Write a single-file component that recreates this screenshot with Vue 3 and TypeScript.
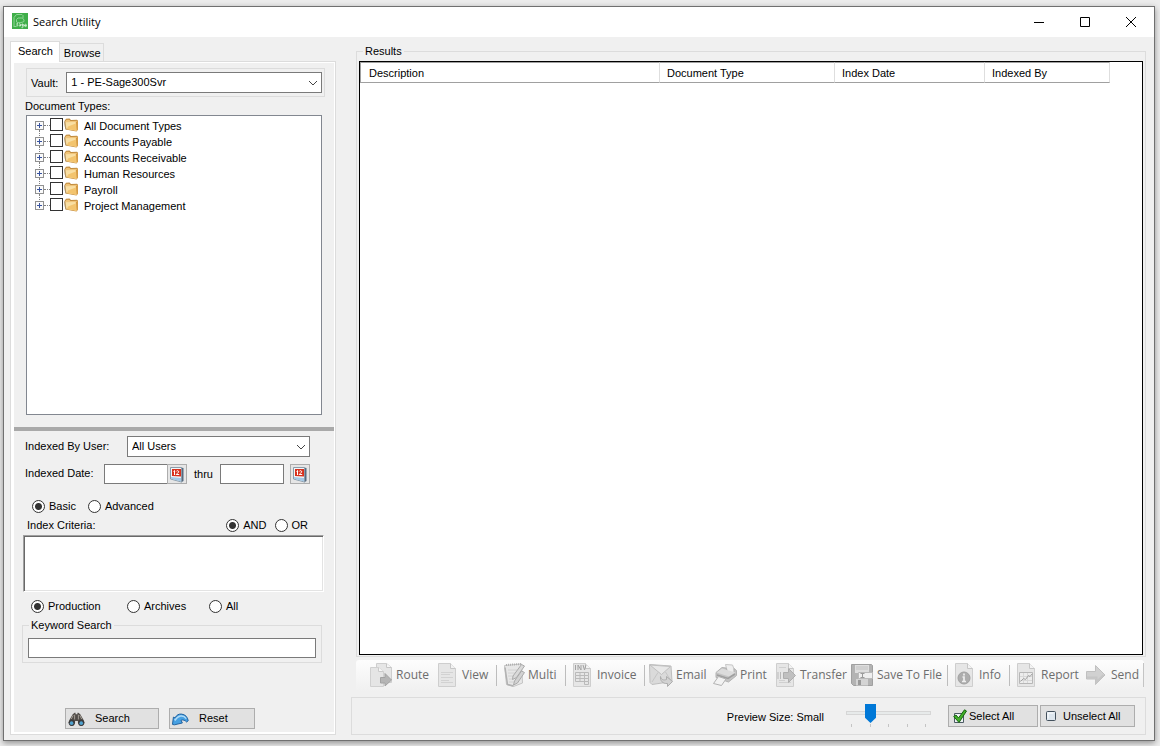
<script setup lang="ts">
import { ref } from 'vue'

interface Tool {
  id: string
  label: string
  iconWidth: number
  endsGroup?: boolean
}

const documentTypes = [
  'All Document Types',
  'Accounts Payable',
  'Accounts Receivable',
  'Human Resources',
  'Payroll',
  'Project Management',
]
const columns = ['Description', 'Document Type', 'Index Date', 'Indexed By']
const tools: Tool[] = [
  { id: 'route', label: 'Route', iconWidth: 22 },
  { id: 'view', label: 'View', iconWidth: 20, endsGroup: true },
  { id: 'multi', label: 'Multi', iconWidth: 21, endsGroup: true },
  { id: 'invoice', label: 'Invoice', iconWidth: 20, endsGroup: true },
  { id: 'email', label: 'Email', iconWidth: 24 },
  { id: 'print', label: 'Print', iconWidth: 24 },
  { id: 'transfer', label: 'Transfer', iconWidth: 20 },
  { id: 'save', label: 'Save To File', iconWidth: 22, endsGroup: true },
  { id: 'info', label: 'Info', iconWidth: 20, endsGroup: true },
  { id: 'report', label: 'Report', iconWidth: 20 },
  { id: 'send', label: 'Send', iconWidth: 21 },
]

const checked = ref<string[]>([])
const mode = ref('basic')
const operator = ref('and')
const scope = ref('production')
const previewSize = ref(1)
</script>

<template>
  <div class="desktop">
    <div class="window">
      <header class="titlebar">
        <svg class="app-icon" viewBox="0 0 16 16" aria-hidden="true">
          <rect width="16" height="16" fill="#3fae49" />
          <path d="M2 14V4.500L4.500 1.500H10l1 1V5M2 13.500h2.500" fill="none" stroke="#8fd596" />
          <path d="M4.500 9V6.500L6 5h4.500L12 7v1.500M4.500 9c2 1.200 5 .8 7.500-.5" fill="none" stroke="#8fd596" />
          <path d="M6 10.500c-1.500-.6-1.800 1-.5 1.200 1 .2.500 1.500-1 1M7 11c1.500-.6 1.500.2 1.500 2-1.500.5-1.800-.8 0-1M11 11c-1.800-.4-1.800 2 0 1.800V11v3c0 .8-1 .8-1.500.6M12.500 12.500h2c0-1.800-2-1.500-2 0 0 1.200 1.200 1.200 2 .8" fill="none" stroke="#e2f5e3" stroke-width=".8" />
        </svg>
        <h1 class="title">Search Utility</h1>
        <div class="caption-buttons">
          <button type="button" aria-label="Minimize">
            <svg viewBox="0 0 12 12"><path d="M1 6.500h10" /></svg>
          </button>
          <button type="button" aria-label="Maximize">
            <svg viewBox="0 0 12 12"><path d="M1.500 1.500h9v9h-9z" /></svg>
          </button>
          <button type="button" aria-label="Close">
            <svg viewBox="0 0 12 12"><path d="M1 1l10 10M11 1L1 11" /></svg>
          </button>
        </div>
      </header>

      <main class="body">
        <section class="sidebar">
          <div class="tabs" role="tablist">
            <button type="button" class="tab active" role="tab" aria-selected="true">Search</button>
            <button type="button" class="tab" role="tab" aria-selected="false">Browse</button>
          </div>
          <form class="tab-page" @submit.prevent>
            <div class="upper">
              <div class="vault-box">
                <label for="vault">Vault:</label>
                <span class="combo grow">
                  <select id="vault"><option>1 - PE-Sage300Svr</option></select>
                  <svg class="chevron" viewBox="0 0 10 6"><path d="M1 1l4 4 4-4" /></svg>
                </span>
              </div>
              <h2 class="heading">Document Types:</h2>
              <ul class="tree">
                <li v-for="(name, i) in documentTypes" :key="name">
                  <button type="button" class="expander" :aria-label="'Expand ' + name">
                    <svg viewBox="0 0 9 9">
                      <rect x=".5" y=".5" width="8" height="8" fill="#fafafa" stroke="#919191" />
                      <path d="M2 4.500h5M4.500 2v5" stroke="#38539f" />
                    </svg>
                  </button>
                  <span class="branch"></span>
                  <input :id="'type-' + i" v-model="checked" type="checkbox" :value="name" />
                  <svg class="folder" viewBox="0 0 15 14" aria-hidden="true">
                    <path d="M.5 3L2 .8l3.500-.3L7 2l6-.2 1 1v9l-1.500 1.700L1.500 11.500z" fill="#c08a3c" />
                    <path d="M1 3.500l1.500-1.800h2.700L6.500 3l7-.3v9L12.500 13 2 11z" fill="#f0c479" />
                    <path d="M1.500 4.200l10-.2.8 8.500L2.500 10.800z" fill="#f9dfa3" />
                    <path d="M4 8.500l7.800-3 .5 7L3 11z" fill="#f3c46e" />
                    <path d="M12 4l.7 8.500 1-1V3z" fill="#d3963d" />
                    <path d="M.7 3.500c0 3 .4 5.500 1.300 7.800" fill="none" stroke="#a9926c" />
                  </svg>
                  <label :for="'type-' + i">{{ name }}</label>
                </li>
              </ul>
            </div>
            <div class="splitter"></div>
            <div class="lower">
              <div class="row user-row">
                <label for="user">Indexed By User:</label>
                <span class="combo">
                  <select id="user"><option>All Users</option></select>
                  <svg class="chevron" viewBox="0 0 10 6"><path d="M1 1l4 4 4-4" /></svg>
                </span>
              </div>
              <div class="row date-row">
                <label class="date-label" for="from">Indexed Date:</label>
                <input id="from" type="text" class="field date" />
                <button type="button" class="calendar joined" aria-label="Pick start date">
                  <svg viewBox="0 0 14 17">
                    <path d="M11 1.500l2.500.5v13L11 16.500z" fill="#566b80" />
                    <path d="M.5 1.500h11v14.500L.5 13z" fill="#f1f5f8" stroke="#8b9ba9" />
                    <path d="M1 11l10 1v3.500L1 12.800z" fill="#a5c9e6" />
                    <path d="M2 3h9v7.500L2 10z" fill="#d8311d" />
                    <path d="M3.500 5.500l1-1V9M6.200 5.500c.5-1.300 2.700-1 2.500.4C8.600 7 6.400 7.500 6.200 8.500h3" fill="none" stroke="#fff" />
                  </svg>
                </button>
                <label class="thru" for="to">thru</label>
                <input id="to" type="text" class="field date" />
                <button type="button" class="calendar" aria-label="Pick end date">
                  <svg viewBox="0 0 14 17">
                    <path d="M11 1.500l2.500.5v13L11 16.500z" fill="#566b80" />
                    <path d="M.5 1.500h11v14.500L.5 13z" fill="#f1f5f8" stroke="#8b9ba9" />
                    <path d="M1 11l10 1v3.500L1 12.800z" fill="#a5c9e6" />
                    <path d="M2 3h9v7.500L2 10z" fill="#d8311d" />
                    <path d="M3.500 5.500l1-1V9M6.200 5.500c.5-1.300 2.700-1 2.500.4C8.600 7 6.400 7.500 6.200 8.500h3" fill="none" stroke="#fff" />
                  </svg>
                </button>
              </div>
              <div class="row mode-row">
                <label class="radio"><input v-model="mode" type="radio" name="mode" value="basic" />Basic</label>
                <label class="radio"><input v-model="mode" type="radio" name="mode" value="advanced" />Advanced</label>
              </div>
              <div class="row criteria-row">
                <label for="criteria">Index Criteria:</label>
                <span class="operators">
                  <label class="radio"><input v-model="operator" type="radio" name="operator" value="and" />AND</label>
                  <label class="radio"><input v-model="operator" type="radio" name="operator" value="or" />OR</label>
                </span>
              </div>
              <textarea id="criteria" class="criteria"></textarea>
              <div class="row scope-row">
                <label class="radio first"><input v-model="scope" type="radio" name="scope" value="production" />Production</label>
                <label class="radio second"><input v-model="scope" type="radio" name="scope" value="archives" />Archives</label>
                <label class="radio"><input v-model="scope" type="radio" name="scope" value="all" />All</label>
              </div>
              <fieldset class="keyword">
                <legend><label for="keyword">Keyword Search</label></legend>
                <input id="keyword" type="text" class="field" />
              </fieldset>
              <div class="actions">
                <button type="submit" class="push search">
                  <svg viewBox="0 0 18 16" aria-hidden="true">
                    <path d="M5 3l2-1.500h1V3h2V1.500h1L13 3l3.500 6 1 3-2 3h-3L10.500 12v-2h-3v2l-2 3h-3l-2-3 1-3z" fill="#514d49" />
                    <path d="M5.500 4L3.500 8M12.500 4l2 4M7 3.500v5M11 3.500v5" stroke="#aaa49b" />
                    <circle cx="4" cy="12" r="3.300" fill="#3a3a3c" /><circle cx="14" cy="12" r="3.300" fill="#3a3a3c" />
                    <circle cx="3.800" cy="12.400" r="1.900" fill="#4fa2cf" /><circle cx="14" cy="12.400" r="1.900" fill="#4fa2cf" />
                  </svg>
                  <span>Search</span>
                </button>
                <button type="reset" class="push reset">
                  <svg viewBox="0 0 18 16" aria-hidden="true">
                    <path d="M1.500 6l1.700.8C5 3.500 7.500 2.500 10 2.800c4 .3 6.500 3.200 7.200 7l-1.700 1.400c-1.700-2-3.800-2.700-6-1.800l1.500 2.800-8.500 2-2-.5z" fill="#46a0e2" stroke="#1d5e9c" />
                    <path d="M2.500 8.500l1 .5C6 4.500 12 3 15 7.500" fill="none" stroke="#b1dcf8" stroke-width="1.500" />
                  </svg>
                  <span>Reset</span>
                </button>
              </div>
            </div>
          </form>
        </section>

        <section class="main-column">
          <fieldset class="results">
            <legend>Results</legend>
            <div class="list">
              <table>
                <thead>
                  <tr><th v-for="column in columns" :key="column" scope="col">{{ column }}</th></tr>
                </thead>
              </table>
            </div>
          </fieldset>

          <div class="toolbar" role="toolbar" aria-label="Document actions">
            <template v-for="tool in tools" :key="tool.id">
              <button type="button" class="tool" :class="tool.id">
                <svg :width="tool.iconWidth" height="24" :viewBox="`0 0 ${tool.iconWidth} 24`" aria-hidden="true">
                  <template v-if="tool.id === 'route'">
                    <path d="M6.500.5h10l5 4v15h-15z" fill="#e6e6e6" stroke="#cecece" />
                    <path d="M16.500.5v4h5" fill="#f6f6f6" stroke="#c6c6c6" />
                    <path d="M.5 4.500h8l5 4v15H.5z" fill="#e5e5e5" stroke="#d0d0d0" />
                    <path d="M8.500 4.500v4h5" fill="#f6f6f6" stroke="#cacaca" />
                    <path d="M10.500 14.500h4.500v-4l6.500 6.500-6.500 6V20h-4.500z" fill="#b5b5b5" stroke="#a2a2a2" />
                  </template>
                  <template v-else-if="tool.id === 'multi'">
                    <path d="M.5 2.500l17-1.500 1 19-9 3.500-7-2z" fill="#e7e7e7" stroke="#c4c4c4" />
                    <path d="M2 2l15-1" stroke="#b0b0b0" stroke-width="2" stroke-dasharray="1 1" />
                    <path d="M4 7h9M4 10h8M4 13h6M5 16h4M5 19h5" stroke="#d2d2d2" />
                    <path d="M1 4.500l2.500 17 6 1.500" fill="none" stroke="#b2b2b2" stroke-width="1.500" />
                    <path d="M9 13L17.500 1.500l3 1.500-8 11.500-4 2z" fill="#dadada" stroke="#aaa" />
                    <path d="M10.500 18l7-10 3 1.500L13.500 20l-4 2z" fill="#d2d2d2" stroke="#aaa" />
                  </template>
                  <template v-else-if="tool.id === 'email'">
                    <path d="M.5 1.500l21.500 1.500 1 15.500-20 3-2-2z" fill="#dadada" stroke="#bebebe" />
                    <path d="M1 2l11.500 9.500L21.500 3.500z" fill="#e8e8e8" stroke="#c0c0c0" />
                    <path d="M3 19l6-9.500M16.500 9l5.500 9" fill="none" stroke="#c5c5c5" />
                    <path d="M11.500 13.500c1 3.500 3 4 6 3V13.500l6 5-5 5V20.500c-5 .5-7.500-3-7-7z" fill="#d2d2d2" stroke="#adadad" />
                  </template>
                  <template v-else-if="tool.id === 'print'">
                    <path d="M12.500 1.500l7 .5 3 8-8-1z" fill="#eee" stroke="#c6c6c6" />
                    <path d="M3 9.500l6-5 4 .5 1.500 4 6.500 1V5.500l2.500 2 .0 5-8 6.500L3 14.500z" fill="#c4c4c4" stroke="#b2b2b2" />
                    <path d="M3.500 9.500l5.500-4 13.500 4-6.500 4z" fill="#dcdcdc" />
                    <path d="M4 12l11 3.500 7-4.500" fill="none" stroke="#9f9f9f" stroke-width="1.500" />
                    <path d="M5.500 13.500l7.500 2.500-4.500 6.500-8-2z" fill="#f2f2f2" stroke="#b2b2b2" />
                  </template>
                  <template v-else-if="tool.id === 'save'">
                    <path d="M.5 1.500h20l1 1v20H2.500l-2-2z" fill="#b3b3b3" stroke="#a0a0a0" />
                    <path d="M4 2h14v8H4z" fill="#dedede" /><path d="M5 4h12M5 6h12" stroke="#c2c2c2" />
                    <path d="M5 16h12v6.500H5z" fill="#d4d4d4" /><path d="M7 17h3v5H7z" fill="#999" />
                    <path d="M7.500 9.500h14v6h-14z" fill="#efefef" stroke="#bababa" />
                    <path d="M9.500 10.500h4M9.500 14.500h4M11.500 10.500v4" stroke="#9b9b9b" />
                  </template>
                  <template v-else-if="tool.id === 'send'">
                    <path d="M.5 8.500h9V2.500l9.500 9.500-9.500 9.500v-5.500h-9z" fill="#d1d1d1" stroke="#c0c0c0" />
                    <path d="M1 14.500h9.500v4.500l7-7" fill="none" stroke="#c6c6c6" stroke-width="2" />
                  </template>
                  <template v-else>
                    <path d="M.5.5h12l5 5v18H.5z" fill="#e6e6e6" stroke="#cecece" />
                    <path d="M12.500.5v5h5" fill="#f3f3f3" stroke="#c6c6c6" />
                    <path v-if="tool.id === 'view'" d="M3 9.500h12M3 11.500h9M3 14.500h12M3 17.500h8M3 19.500h12" stroke="#d2d2d2" />
                    <template v-else-if="tool.id === 'transfer'">
                      <path d="M3 4.500h7M3 17.500h6M3 19.500h12" stroke="#d0d0d0" />
                      <path d="M2 9v7M4.500 9v7" stroke="#b9b9b9" />
                      <path d="M7.500 9.500h5V5.500l7 7-7 7v-4h-5z" fill="#c0c0c0" stroke="#aeaeae" />
                    </template>
                    <template v-else-if="tool.id === 'invoice'">
                      <path d="M2.500 2v5M5 7V2l3 5V2M10 2l1.500 5L13 2" fill="none" stroke="#a2a2a2" />
                      <path d="M2.500 9.500h13v3h-13zM2.500 12.500v6h13v-6M7 9.500v9M11.500 9.500v12h4v-3M2.500 15.500h13" fill="none" stroke="#bababa" />
                    </template>
                    <template v-else-if="tool.id === 'info'">
                      <circle cx="9" cy="15" r="6" fill="#adadad" stroke="#a0a0a0" />
                      <path d="M9 10.500v2M7.500 14H9v4.500M7 18.500h4" fill="none" stroke="#eee" stroke-width="1.700" />
                    </template>
                    <template v-else>
                      <path d="M2.500 9.500h13v11h-13z" fill="#ededed" stroke="#b7b7b7" />
                      <path d="M3 13.500h12M3 17.500h12M6.500 10v10M10.500 10v10" stroke="#d8d8d8" />
                      <path d="M3.500 18.500l3-3 2 1 3-4 1.500 1 2-2.500" fill="none" stroke="#a2a2a2" />
                    </template>
                  </template>
                </svg>
                <span>{{ tool.label }}</span>
              </button>
              <span v-if="tool.endsGroup" class="separator"></span>
            </template>
          </div>

          <footer class="statusbar">
            <label for="preview" class="preview-label">Preview Size: Small</label>
            <span class="slider">
              <input id="preview" v-model.number="previewSize" type="range" min="0" max="4" step="1" />
              <span class="ticks"><i v-for="n in 5" :key="n"></i></span>
            </span>
            <button type="button" class="push select-all">
              <svg viewBox="0 0 14 15" aria-hidden="true">
                <path d="M1.500 4.500h9v9h-9z" fill="#eef2f4" stroke="#4c5a64" />
                <path d="M.7 7.500l2.300-1.500 2.500 3L11.500.8l2 1.200-7.500 11.500z" fill="#43b02a" stroke="#17640f" />
              </svg>
              <span>Select All</span>
            </button>
            <button type="button" class="push unselect-all">
              <svg viewBox="0 0 12 12" aria-hidden="true">
                <rect x="1.500" y="1.500" width="9" height="9" rx="1" fill="#dde6ee" stroke="#44515d" />
                <path d="M3 8.500V3h5.500" fill="none" stroke="#fff" />
              </svg>
              <span>Unselect All</span>
            </button>
          </footer>
        </section>
      </main>
    </div>
  </div>
</template>

<style>
body {
  margin: 0;
}
</style>

<style scoped>
* {
  box-sizing: border-box;
}
.desktop {
  display: flex;
  min-height: 100vh;
  padding: 6px 5px 5px 3px;
  background: #ececec;
  color: #000;
  font: 11px/16px "Liberation Sans", Arial, sans-serif;
}
button, input, select, textarea {
  margin: 0;
  font: inherit;
  color: inherit;
}
svg {
  display: block;
  flex: none;
}
.window {
  display: flex;
  flex: 1;
  flex-direction: column;
  min-width: 0;
  border: 1px solid #707070;
  background: #f0f0f0;
  box-shadow: 0 2px 6px rgba(0, 0, 0, 0.4);
}
.titlebar {
  display: flex;
  align-items: center;
  height: 30px;
  padding-left: 8px;
  background: #fff;
}
.app-icon {
  width: 16px;
  height: 16px;
  margin-bottom: 2px;
}
.title {
  flex: 1;
  margin: 0 0 0 5px;
  font: 11px/16px "Open Sans", "Noto Sans", sans-serif;
}
.caption-buttons {
  display: flex;
}
.caption-buttons button {
  display: flex;
  align-items: center;
  justify-content: center;
  width: 46px;
  height: 30px;
  padding: 0;
  border: 0;
  background: none;
}
.caption-buttons svg {
  width: 12px;
  height: 12px;
  fill: none;
  stroke: #000;
}
.body {
  display: flex;
  flex: 1;
  gap: 15px;
  padding: 4px 8px 5px 6px;
}
.sidebar {
  display: flex;
  flex: none;
  flex-direction: column;
  width: 326px;
}
.tabs {
  display: flex;
  align-items: flex-end;
  height: 20px;
}
.tab {
  height: 18px;
  padding: 0 2px 0 4px;
  border: 1px solid #dcdcdc;
  border-left: 0;
  border-bottom: 0;
  background: #f0f0f0;
  line-height: 16px;
}
.tab.active {
  z-index: 1;
  height: 21px;
  margin-bottom: -1px;
  padding: 0 6px 2px 7px;
  border-left: 1px solid #dcdcdc;
  background: #fff;
}
.tab-page {
  display: flex;
  flex: 1;
  flex-direction: column;
  padding: 1px 1px 2px 3px;
  border: 1px solid #dcdcdc;
  background: #fff;
}
.upper, .lower {
  background: #f0f0f0;
}
.upper {
  display: flex;
  flex: 1;
  flex-direction: column;
  padding: 5px 9px 12px 11px;
}
.vault-box {
  display: flex;
  align-items: center;
  gap: 8px;
  margin-left: 1px;
  padding: 3px 2px 3px 4px;
  border: 1px solid #dcdcdc;
}
.combo {
  position: relative;
  display: flex;
}
.grow {
  flex: 1;
}
.combo select {
  width: 100%;
  height: 21px;
  padding: 0 20px 2px 4px;
  border: 1px solid #7a7a7a;
  border-radius: 0;
  background: #fff;
  appearance: none;
}
.chevron {
  position: absolute;
  top: 8px;
  right: 4px;
  width: 10px;
  height: 6px;
  fill: none;
  stroke: #444;
  pointer-events: none;
}
.heading {
  margin: 0;
  font: inherit;
  line-height: 18px;
}
.tree {
  flex: 1;
  margin: 0 3px 0 1px;
  padding: 2px 8px;
  border: 1px solid #828790;
  background: #fff;
  list-style: none;
}
.tree li {
  position: relative;
  display: flex;
  align-items: center;
  height: 16px;
}
.tree li + li::before {
  position: absolute;
  top: -4px;
  left: 4px;
  height: 8px;
  border-left: 1px dotted #808080;
  content: "";
}
.expander {
  margin-bottom: 1px;
  padding: 0;
  border: 0;
  background: none;
}
.expander svg {
  width: 9px;
  height: 9px;
}
.branch {
  width: 6px;
  margin-bottom: 1px;
  border-top: 1px dotted #808080;
}
.tree input {
  width: 13px;
  height: 13px;
  margin-bottom: 3px;
  border: 1px solid #333;
  background: #fff;
  appearance: none;
}
.tree input:checked {
  background: #333;
  box-shadow: inset 0 0 0 2px #fff;
}
.folder {
  width: 15px;
  height: 14px;
  margin: 0 5px 2px 1px;
}
.splitter {
  height: 4px;
  background: #a9a9a9;
}
.lower {
  padding: 5px 9px 3px;
}
.row {
  display: flex;
  align-items: center;
  padding-left: 2px;
}
.user-row .combo {
  width: 183px;
}
.user-row label {
  width: 102px;
  padding-bottom: 2px;
}
.date-row {
  margin-top: 7px;
}
.date-label {
  width: 79px;
  padding-bottom: 2px;
}
.field {
  height: 20px;
  padding: 0 3px;
  border: 1px solid #7a7a7a;
  background: #fff;
}
.date {
  width: 64px;
}
.calendar {
  display: flex;
  align-items: center;
  justify-content: center;
  width: 20px;
  height: 20px;
  margin-left: 6px;
  padding: 0;
  border: 1px solid #adadad;
  background: #e6e6e6;
}
.calendar.joined {
  margin-left: -1px;
}
.calendar svg {
  width: 14px;
  height: 17px;
}
.thru {
  width: 33px;
  padding-left: 7px;
}
.radio {
  display: flex;
  align-items: center;
  gap: 4px;
}
.radio input {
  width: 13px;
  height: 13px;
  border: 1px solid #333;
  border-radius: 50%;
  background: #fff;
  appearance: none;
}
.radio input:checked {
  background: radial-gradient(circle, #333 3px, #fff 4px);
}
.mode-row {
  gap: 12px;
  margin-top: 14px;
  padding-left: 9px;
}
.criteria-row {
  justify-content: space-between;
  margin-top: 3px;
  padding: 0 17px 0 4px;
}
.operators {
  display: flex;
  gap: 8px;
}
.criteria {
  display: block;
  width: 301px;
  height: 57px;
  margin-top: 2px;
  border: 1px solid;
  border-color: #a0a0a0 #fff #fff #a0a0a0;
  background: #fff;
  box-shadow: inset 1px 1px #696969, inset -1px -1px #e3e3e3;
  resize: none;
}
.scope-row {
  margin-top: 6px;
  padding-left: 8px;
}
.scope-row .first {
  width: 96px;
}
.scope-row .second {
  width: 82px;
}
fieldset {
  min-width: 0;
  margin: 0;
  border: 1px solid #dcdcdc;
}
legend {
  padding: 0 2px;
  line-height: 13px;
}
.keyword {
  display: flex;
  width: 300px;
  margin: 5px 0 0 -1px;
  padding: 6px 5px 4px;
}
.keyword legend {
  margin-left: 1px;
}
.keyword .field {
  flex: 1;
}
.actions {
  display: flex;
  gap: 10px;
  margin: 45px 0 0 42px;
}
.push {
  display: flex;
  align-items: center;
  border: 1px solid #adadad;
  background: #e1e1e1;
  white-space: nowrap;
}
.search, .reset {
  height: 21px;
  padding: 0 2px;
  gap: 10px;
}
.search svg, .reset svg {
  width: 17px;
  height: 16px;
}
.search span, .reset span {
  padding-bottom: 2px;
}
.search {
  width: 94px;
}
.reset {
  width: 86px;
}
.main-column {
  display: flex;
  flex: 1;
  flex-direction: column;
  min-width: 0;
  padding-top: 4px;
}
.results {
  display: flex;
  flex: 1;
  margin-left: 5px;
  padding: 3px 2px 1px;
}
.results legend {
  margin-left: 4px;
}
.list {
  flex: 1;
  border: 1px solid #000;
  background: #fff;
}
table {
  width: 750px;
  border-collapse: separate;
  border-spacing: 0;
  table-layout: fixed;
}
th {
  height: 21px;
  padding: 0 0 0 7px;
  border-top: 1px solid #a0a0a0;
  border-right: 1px solid #dedede;
  border-bottom: 1px solid #a0a0a0;
  font-weight: normal;
  text-align: left;
}
th:first-child {
  width: 300px;
  padding-left: 8px;
  border-left: 1px solid #a0a0a0;
}
th:nth-child(2) {
  width: 175px;
}
th:nth-child(3) {
  width: 150px;
}
.toolbar {
  display: flex;
  align-items: center;
  height: 31px;
  margin: 3px 2px 0 5px;
  padding: 0 0 1px 14px;
  border-radius: 3px;
  background: linear-gradient(#fdfdfd, #f0f0f0);
}
.tool {
  display: flex;
  flex: none;
  align-items: center;
  gap: 4px;
  padding: 0;
  border: 0;
  background: none;
  color: #6d6d6d;
  font: 12px/16px "Open Sans", "Noto Sans", sans-serif;
  white-space: nowrap;
}
.tool span {
  padding-bottom: 1px;
}
.separator {
  width: 1px;
  height: 21px;
  margin-right: 7px;
  background: #bdbdbd;
}
.route { width: 68px; }
.view { width: 58px; }
.multi { width: 61px; gap: 3px; }
.invoice { width: 71px; }
.invoice + .separator { margin-right: 4px; }
.email { width: 64px; gap: 3px; }
.print { width: 63px; gap: 3px; }
.transfer { width: 75px; }
.save { width: 96px; }
.info { width: 54px; }
.report { width: 69px; }
.send { width: 58px; border-right: 1px solid #c4c4c4; }
.statusbar {
  display: flex;
  align-items: center;
  justify-content: flex-end;
  height: 38px;
  margin-top: 6px;
  padding-right: 10px;
  border: 1px solid #dcdcdc;
}
.preview-label {
  padding-top: 2px;
  margin-right: 22px;
}
.slider {
  display: flex;
  flex-direction: column;
  width: 85px;
  margin: 0 17px 2px 0;
}
.slider input {
  width: 100%;
  height: 19px;
  background: none;
  appearance: none;
}
.slider input::-webkit-slider-runnable-track {
  height: 4px;
  border: 1px solid #d6d6d6;
  background: #e7eaea;
}
.slider input::-webkit-slider-thumb {
  width: 11px;
  height: 19px;
  margin-top: -8px;
  background: #0078d7;
  clip-path: polygon(0 0, 100% 0, 100% 72%, 50% 100%, 0 72%);
  appearance: none;
}
.ticks {
  display: flex;
  justify-content: space-between;
  padding: 1px 5px 0;
}
.ticks i {
  width: 1px;
  height: 3px;
  background: #c4c4c4;
}
.select-all, .unselect-all {
  height: 22px;
  padding: 0 4px;
}
.select-all {
  width: 90px;
  gap: 2px;
}
.select-all svg {
  width: 14px;
  height: 15px;
}
.unselect-all {
  width: 95px;
  margin-left: 2px;
  gap: 6px;
}
.unselect-all svg {
  width: 12px;
  height: 12px;
}
</style>
